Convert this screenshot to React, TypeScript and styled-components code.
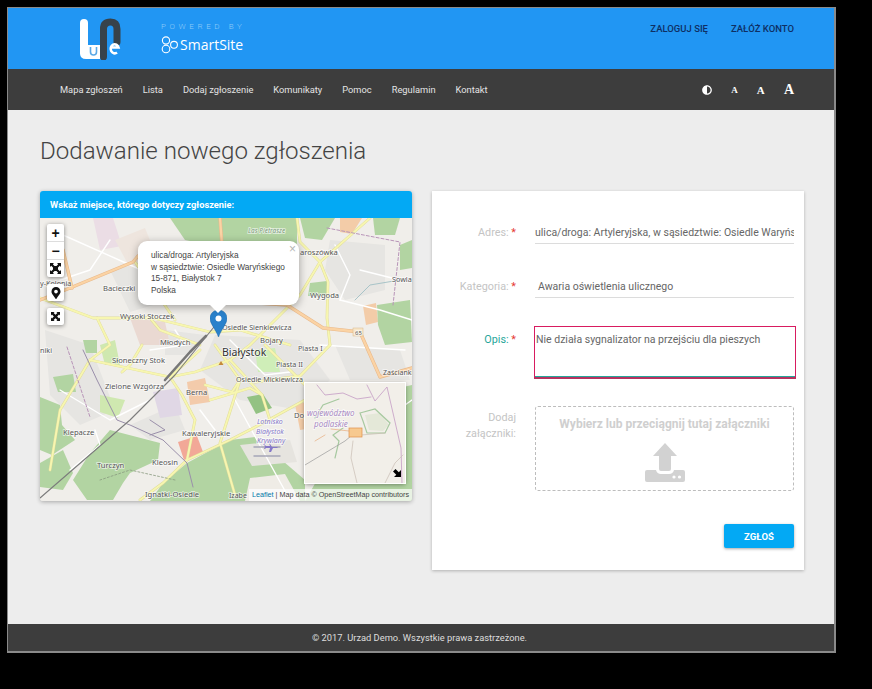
import React from "react";
import styled, { createGlobalStyle } from "styled-components";
import { FaAdjust, FaMapMarkerAlt } from "react-icons/fa";

const GlobalStyle = createGlobalStyle`
  html, body {
    margin: 0;
    background: #000;
  }
  body {
    font-family: Roboto, "Liberation Sans", sans-serif;
  }
`;

const Frame = styled.div`
  box-sizing: border-box;
  display: flex;
  flex-direction: column;
  width: 828px;
  height: 646px;
  margin: 7px 0 36px 8px;
  border: 1px solid #8a8a8a;
  border-left-width: 0;
  border-right-width: 2px;
  border-bottom-width: 2px;
  box-shadow: -1px 0 0 #8a8a8a;
`;

const Header = styled.header`
  display: flex;
  justify-content: space-between;
  height: 61px;
  background: #2196f3;
  padding: 0 40px 0 71px;
`;

const Brand = styled.div`
  display: flex;
  align-items: flex-start;
`;

const Logo = styled.svg`
  width: 42px;
  height: 42px;
  margin: 10px 40px 0 0;
`;

const Powered = styled.div`
  display: flex;
  flex-direction: column;
  padding-top: 14px;
`;

const PoweredBy = styled.span`
  font-size: 8px;
  line-height: 10px;
  letter-spacing: 3.6px;
  color: #8fcbf8;
  font-weight: 300;
`;

const SmartSite = styled.div`
  display: flex;
  align-items: center;
  gap: 1px;
  margin-top: 4px;
  color: #fff;
  font-family: "Open Sans", sans-serif;
  font-size: 14px;
  line-height: 18px;
`;

const Account = styled.nav`
  display: flex;
  gap: 23px;
  padding-top: 14px;
`;

const AccountLink = styled.a`
  font-size: 9.5px;
  line-height: 13px;
  font-weight: 500;
  color: #0e2f63;
`;

const NavBar = styled.nav`
  display: flex;
  align-items: center;
  justify-content: space-between;
  height: 41px;
  background: #3d3d3d;
  padding: 0 40px 0 52px;
`;

const NavLinks = styled.div`
  display: flex;
  gap: 20px;
`;

const NavLink = styled.a`
  font-size: 9.3px;
  font-weight: 400;
  color: #e4e4e4;
`;

const NavTools = styled.div`
  display: flex;
  align-items: center;
  justify-content: space-between;
  width: 92px;
  color: #fff;
`;

const SizeA = styled.span<{ $size: number }>`
  font-family: "Liberation Serif", serif;
  font-weight: 700;
  font-size: ${({ $size }) => $size}px;
  line-height: 14px;
`;

const Main = styled.main`
  flex: 1;
  background: #ededed;
  padding: 27px 30px 0 32px;
`;

const Title = styled.h1`
  margin: 0 0 26px;
  font-size: 24.1px;
  line-height: 28px;
  font-weight: 300;
  color: #444;
`;

const Columns = styled.div`
  display: grid;
  grid-template-columns: 372px 372px;
  column-gap: 20px;
  align-items: start;
`;

const MapCard = styled.section`
  border-radius: 3px;
  overflow: hidden;
  box-shadow: 0 1px 4px rgba(0, 0, 0, 0.3);
`;

const MapHeading = styled.div`
  height: 27px;
  padding-left: 10px;
  background: #03a9f4;
  color: #fff;
  font-size: 9.3px;
  font-weight: 700;
  line-height: 27px;
`;

const MapArea = styled.div`
  position: relative;
  height: 283px;
  overflow: hidden;
`;

const MapSvg = styled.svg`
  display: block;
  width: 372px;
  height: 283px;
`;

const MapShapes = styled.g`
  filter: blur(0.7px);
`;

const Place = styled.text<{ $size?: number; $color?: string; $italic?: boolean }>`
  font-family: "Noto Sans", "Open Sans", sans-serif;
  font-size: ${({ $size }) => $size ?? 7.6}px;
  font-style: ${({ $italic }) => ($italic ? "italic" : "normal")};
  fill: ${({ $color }) => $color ?? "#555"};
  stroke: rgba(255, 255, 255, 0.65);
  stroke-width: 1.6px;
  paint-order: stroke;
`;

const ControlStack = styled.div<{ $top: number }>`
  position: absolute;
  left: 7px;
  top: ${({ $top }) => $top}px;
  display: flex;
  flex-direction: column;
  width: 17px;
  border-radius: 2px;
  background: #fff;
  box-shadow: 0 1px 4px rgba(0, 0, 0, 0.45);
`;

const ControlButton = styled.div`
  display: flex;
  align-items: center;
  justify-content: center;
  height: 17px;
  font-family: "Liberation Sans", sans-serif;
  font-size: 14px;
  font-weight: 700;
  color: #111;
  border-bottom: 1px solid #ddd;
  &:last-child {
    border-bottom: 0;
  }
`;

const Popup = styled.div`
  position: absolute;
  left: 98px;
  top: 23px;
  box-sizing: border-box;
  width: 161px;
  height: 64px;
  padding: 9px 0 0 13px;
  background: #fff;
  border-radius: 9px;
  box-shadow: 0 2px 8px rgba(0, 0, 0, 0.35);
  font-family: "Liberation Sans", sans-serif;
  font-size: 8.3px;
  line-height: 11.5px;
  color: #444;
  &::after {
    content: "";
    position: absolute;
    left: 72px;
    bottom: -8px;
    width: 0;
    height: 0;
    border-left: 8px solid transparent;
    border-right: 8px solid transparent;
    border-top: 8px solid #fff;
  }
`;

const PopupClose = styled.span`
  position: absolute;
  right: 3px;
  top: 2px;
  font-size: 12px;
  line-height: 12px;
  color: #b5b5b5;
`;

const Marker = styled.svg`
  position: absolute;
  left: 170px;
  top: 92px;
  width: 17px;
  height: 27px;
`;

const MiniMap = styled.div`
  position: absolute;
  left: 265px;
  top: 165px;
  width: 100px;
  height: 100px;
  background: #f2efe9;
  box-shadow: 0 0 0 1px #fff, 0 1px 5px rgba(0, 0, 0, 0.5);
`;

const MiniSvg = styled.svg`
  display: block;
  width: 100px;
  height: 100px;
`;

const Attribution = styled.div`
  position: absolute;
  right: 0;
  bottom: 0;
  padding: 0 3px;
  background: rgba(255, 255, 255, 0.7);
  font-family: "Liberation Sans", sans-serif;
  font-size: 7.2px;
  line-height: 12px;
  color: #444;
  white-space: nowrap;
`;

const LeafletLink = styled.span`
  color: #0078a8;
`;

const FormCard = styled.form`
  box-sizing: border-box;
  height: 379px;
  padding: 31px 10px 0 0;
  background: #fff;
  box-shadow: 0 1px 3px rgba(0, 0, 0, 0.25);
`;

const Row = styled.div<{ $top: number }>`
  display: grid;
  grid-template-columns: 84px 259px;
  column-gap: 19px;
  margin-top: ${({ $top }) => $top}px;
`;

const Label = styled.label<{ $active?: boolean }>`
  font-size: 10.8px;
  line-height: 22px;
  text-align: right;
  padding-top: ${({ $active }) => ($active ? 3 : 0)}px;
  color: ${({ $active }) => ($active ? "#26a69a" : "#c4c4c4")};
`;

const Required = styled.span`
  color: #e53935;
`;

const LongLabel = styled(Label)`
  line-height: 16px;
  padding-top: 4px;
`;

const TextField = styled.input`
  box-sizing: border-box;
  width: 100%;
  height: 22px;
  padding: 0;
  border: 0;
  border-bottom: 1px solid #dcdcdc;
  outline: 0;
  background: transparent;
  font-family: Roboto, sans-serif;
  font-size: 10.5px;
  color: #666;
`;

const CategoryValue = styled.div`
  box-sizing: border-box;
  height: 22px;
  padding-left: 3px;
  border-bottom: 1px solid #dcdcdc;
  font-size: 10.5px;
  line-height: 21px;
  color: #666;
`;

const Description = styled.textarea`
  display: block;
  box-sizing: border-box;
  width: 262px;
  height: 53px;
  margin-left: -1px;
  padding: 6px 1px;
  border: 1px solid #d81b60;
  border-bottom: 2px solid #b5325f;
  box-shadow: inset 0 -1px 0 #26a69a;
  outline: 0;
  resize: none;
  font-family: Roboto, sans-serif;
  font-size: 10.5px;
  line-height: 14px;
  color: #666;
`;

const DropZone = styled.div`
  box-sizing: border-box;
  display: flex;
  flex-direction: column;
  align-items: center;
  height: 85px;
  padding-top: 9px;
  border: 1px dashed #bdbdbd;
  border-radius: 3px;
`;

const DropText = styled.span`
  font-size: 12px;
  line-height: 16px;
  font-weight: 700;
  color: #cfcfcf;
`;

const UploadIcon = styled.svg`
  width: 40px;
  height: 40px;
  margin-top: 11px;
`;

const Actions = styled.div`
  display: flex;
  justify-content: flex-end;
  margin-top: 33px;
`;

const SubmitButton = styled.button`
  width: 70px;
  height: 24px;
  padding: 0;
  border: 0;
  border-radius: 2px;
  background: #03a9f4;
  box-shadow: 0 1px 3px rgba(0, 0, 0, 0.35);
  color: #fff;
  font-family: Roboto, sans-serif;
  font-size: 9.5px;
  font-weight: 700;
`;

const Footer = styled.footer`
  height: 27px;
  background: #3d3d3d;
  color: #ddd;
  font-size: 9.3px;
  line-height: 28px;
  text-align: center;
  padding-right: 3px;
`;

const menu = ["Mapa zgłoszeń", "Lista", "Dodaj zgłoszenie", "Komunikaty", "Pomoc", "Regulamin", "Kontakt"];

const places: { t: string; x: number; y: number; s?: number; c?: string; i?: boolean }[] = [
  { t: "Las Pietrasze", x: 248, y: 233, s: 6.5, c: "#7d9a7d", i: true },
  { t: "aroszówka", x: 300, y: 255 },
  { t: "Wygoda", x: 310, y: 298 },
  { t: "Sowla", x: 392, y: 282, s: 7.2 },
  { t: "Osiedle Sienkiewicza", x: 222, y: 330, s: 7.2 },
  { t: "Bojary", x: 260, y: 343 },
  { t: "Wysoki Stoczek", x: 120, y: 319 },
  { t: "Bacieczki", x: 103, y: 291 },
  { t: "y-Kolonia", x: 40, y: 286, s: 7.2 },
  { t: "Młodych", x: 160, y: 345 },
  { t: "niki", x: 40, y: 353, s: 7.2 },
  { t: "Słoneczny Stok", x: 112, y: 363 },
  { t: "Zielone Wzgórza", x: 105, y: 389 },
  { t: "Berna", x: 186, y: 395 },
  { t: "Klepacze", x: 63, y: 435 },
  { t: "Kawaleryjskie", x: 182, y: 436 },
  { t: "Turczyn", x: 97, y: 468 },
  { t: "Kleosin", x: 152, y: 465 },
  { t: "Ignatki-Osiedle", x: 145, y: 497 },
  { t: "Białystok", x: 222, y: 356, s: 10.5, c: "#333" },
  { t: "Piasta I", x: 298, y: 351, s: 7.2 },
  { t: "Piasta II", x: 276, y: 367, s: 7.2 },
  { t: "Osiedle Mickiewicza", x: 236, y: 382, s: 7.2 },
  { t: "Zaścianki", x: 383, y: 375, s: 7 },
  { t: "Do", x: 294, y: 418 },
  { t: "Lotnisko", x: 257, y: 424, s: 7, c: "#8578c8", i: true },
  { t: "Białystok", x: 256, y: 434, s: 7, c: "#8578c8", i: true },
  { t: "Krywlany", x: 257, y: 443, s: 7, c: "#8578c8", i: true },
  { t: "Izabe", x: 229, y: 498, s: 7 }
];

// yellow streets with a darker casing
const streets = [
  "M40 298 L93 318 L153 318 L210 332 L240 330 L290 345",
  "M90 360 L170 377 L200 350",
  "M140 500 L163 483 L187 460 L230 440 L263 423 L305 400",
  "M320 262 L300 295 L287 308 L250 345 L230 360",
  "M320 262 L328 282 L327 318 L330 345",
  "M297 218 L300 242 L320 262 L370 218",
  "M170 377 L182 395 L195 420 L187 460",
  "M230 360 L195 372 L170 377",
  "M230 360 L262 395 L270 420",
  "M215 345 L240 380 L220 443 L235 495",
  "M265 345 L310 390",
  "M97 318 L110 345 L90 360 L60 410 L50 470",
  "M135 262 L175 320",
  "M200 345 L160 330 L150 318",
  "M255 382 L300 376 L330 345",
  "M210 400 L250 388 L262 395",
  "M205 385 L232 392 L240 380",
  "M142 345 L130 365 L122 372"
];

const whiteRoads = [
  "M63 235 L137 268 L190 300",
  "M320 345 L405 350",
  "M235 400 L290 500",
  "M70 470 L100 445 L95 430",
  "M360 270 L400 280",
  "M370 430 L412 400",
  "M60 390 L110 420 L150 400",
  "M110 240 L90 270 L60 280",
  "M340 300 L380 310 L412 320",
  "M200 410 L215 430",
  "M150 350 L185 345 L175 330",
  "M230 340 L265 375 L290 372",
  "M335 245 L350 275 L340 300"
];

const orangeRoads = ["M70 288 L133 262 L138 256", "M63 250 L72 288", "M220 218 L222 245", "M287 305 L323 328 L360 332 L380 377 L412 368", "M40 300 L70 288", "M215 300 L287 305"];

const App = () => {
  return (
    <>
      <GlobalStyle />
      <Frame>
        <Header>
          <Brand>
            <Logo viewBox="79 18 42 42">
              <path d="M103.5 57 V29 Q103.5 22 110.5 22 Q117 22 117 29 V42" stroke="#37424a" strokeWidth="7" fill="none" strokeLinecap="round" />
              <path d="M84 23 V52" stroke="#fff" strokeWidth="8" strokeLinecap="round" fill="none" />
              <path d="M80 45 H100 V59 H86 Q80 59 80 53 Z" fill="#fff" />
              <path d="M90.5 47 V52 Q90.5 55 93.5 55 Q96.5 55 96.5 52 V47" stroke="#5ca9e6" strokeWidth="1.6" fill="none" />
              <path d="M111 47.5 H118.5 A4 4.5 0 1 0 117 52.5" stroke="#fff" strokeWidth="2.6" fill="none" />
            </Logo>
            <Powered>
              <PoweredBy>POWERED BY</PoweredBy>
              <SmartSite>
                <svg width="18" height="18" viewBox="0 0 18 18" fill="none" stroke="#fff" strokeWidth="1.1">
                  <circle cx="5" cy="4.5" r="3.6" />
                  <circle cx="5" cy="13" r="3.8" />
                  <circle cx="13" cy="8.8" r="3.4" />
                </svg>
                SmartSite
              </SmartSite>
            </Powered>
          </Brand>
          <Account>
            <AccountLink>ZALOGUJ SIĘ</AccountLink>
            <AccountLink>ZAŁÓŻ KONTO</AccountLink>
          </Account>
        </Header>
        <NavBar>
          <NavLinks>
            {menu.map((item) => (
              <NavLink key={item}>{item}</NavLink>
            ))}
          </NavLinks>
          <NavTools>
            <FaAdjust size={10} />
            <SizeA $size={9}>A</SizeA>
            <SizeA $size={11}>A</SizeA>
            <SizeA $size={14}>A</SizeA>
          </NavTools>
        </NavBar>
        <Main>
          <Title>Dodawanie nowego zgłoszenia</Title>
          <Columns>
            <MapCard>
              <MapHeading>Wskaż miejsce, którego dotyczy zgłoszenie:</MapHeading>
              <MapArea>
                <MapSvg viewBox="40 218 372 283">
                  <rect x="40" y="218" width="372" height="283" fill="#f0eeea" />
                  <MapShapes>
                    {/* built up areas */}
                    <g fill="#e6e5e2">
                      <path d="M110 270 L150 262 L170 300 L130 312 Z" />
                      <path d="M45 330 L90 345 L115 410 L80 425 L50 395 Z" />
                      <path d="M215 335 L300 340 L330 380 L300 410 L240 400 L200 370 Z" />
                      <path d="M330 240 L385 245 L385 290 L345 300 L325 270 Z" />
                      <path d="M130 425 L175 405 L185 430 L150 440 Z" />
                      <path d="M335 345 L400 350 L410 380 L350 380 Z" />
                      <path d="M165 330 L205 335 L190 355 L165 355 Z" />
                    </g>
                    {/* pink and orange blocks */}
                    <path d="M93 218 L113 218 L122 246 L100 250 Z" fill="#ebdde5" />
                    <path d="M115 240 L145 228 L160 265 L130 268 Z" fill="#eee5de" />
                    <path d="M153 392 L178 388 L182 415 L160 418 Z" fill="#e0d7e5" />
                    <path d="M187 382 L205 378 L210 402 L190 405 Z" fill="#f3cbab" />
                    <path d="M178 442 L197 436 L203 452 L184 460 Z" fill="#f2a897" />
                    <path d="M340 218 L362 218 L352 234 L340 232 Z" fill="#f3cca8" />
                    <path d="M363 306 L376 303 L378 322 L366 325 Z" fill="#f3cca8" />
                    <path d="M295 404 L325 400 L330 425 L300 430 Z" fill="#f3cca8" />
                    <path d="M130 318 L165 322 L170 345 L140 345 Z" fill="#ead9d2" />
                    {/* forest */}
                    <g fill="#b2d4a2">
                      <path d="M170 218 L297 218 L297 245 L210 245 L185 240 Z" />
                      <path d="M300 218 L335 218 L322 240 L305 238 Z" />
                      <path d="M373 218 L400 218 L395 235 L375 235 Z" />
                      <path d="M400 245 L412 240 L412 268 L400 270 Z" />
                      <path d="M310 283 L327 281 L327 296 L308 296 Z" />
                      <path d="M377 305 L410 300 L412 342 L385 345 L378 325 Z" />
                      <path d="M83 340 L97 340 L97 353 L86 353 Z" />
                      <path d="M53 377 L73 374 L76 392 L58 392 Z" />
                      <path d="M40 397 L60 405 L62 425 L75 440 L52 455 L40 450 Z" />
                      <path d="M110 430 L160 443 L158 460 L130 473 L123 483 L113 500 L87 500 L73 480 L90 453 Z" />
                      <path d="M40 463 L63 450 L73 473 L63 490 L40 487 Z" />
                      <path d="M163 483 L187 463 L230 440 L255 437 L305 480 L305 501 L150 501 Z" />
                      <path d="M345 400 L412 385 L412 501 L305 501 L340 440 Z" />
                    </g>
                    <path d="M247 397 L263 394 L272 408 L256 414 Z" fill="#93c283" />
                    <path d="M100 345 L115 340 L120 365 L105 365 Z" fill="#cfe8b0" />
                    <path d="M255 350 L275 348 L280 372 L258 372 Z" fill="#cfeeb8" />
                    <path d="M100 395 L125 400 L118 418 L100 412 Z" fill="#cfe8b0" />
                    <path d="M240 445 L290 440 L297 462 L252 466 Z" fill="#e6e4df" />
                    <path d="M250 478 L285 474 L300 501 L245 501 Z" fill="#efece6" />
                    {/* streets */}
                    <g fill="none" strokeLinecap="round" strokeLinejoin="round">
                      {whiteRoads.map((d) => (
                        <path key={d} d={d} stroke="#fff" strokeWidth="1.4" />
                      ))}
                      {streets.map((d) => (
                        <path key={d} d={d} stroke="#e0dc9a" strokeWidth="2.8" />
                      ))}
                      {streets.map((d) => (
                        <path key={d} d={d} stroke="#f7f6b0" strokeWidth="1.9" />
                      ))}
                      {orangeRoads.map((d) => (
                        <path key={d} d={d} stroke="#e8b98c" strokeWidth="3.4" />
                      ))}
                      {orangeRoads.map((d) => (
                        <path key={d} d={d} stroke="#fbd3a4" strokeWidth="2.3" />
                      ))}
                      <path d="M83 350 L97 380 L117 420 L130 425 L163 440 L187 463 L193 487" stroke="#9a8faa" strokeWidth="1" />
                      <path d="M150 420 L165 430 L150 435" stroke="#9a8faa" strokeWidth="1" />
                      <path d="M40 498 L130 420 L175 375 L205 338 L218 322" stroke="#7c7c7c" strokeWidth="1.1" />
                      <path d="M165 380 L190 352 L206 336" stroke="#777" strokeWidth="2.6" />
                      <path d="M67 347 L90 417" stroke="#b894b8" strokeWidth="1" strokeDasharray="3 2" />
                      <path d="M327 228 L400 242 L393 305" stroke="#b894b8" strokeWidth="1" strokeDasharray="3 2" />
                      <path d="M355 300 L370 285 L400 280" stroke="#a8c4c8" strokeWidth="1" />
                      <path d="M175 480 L130 470 L100 480" stroke="#8a9a80" strokeWidth="0.8" strokeDasharray="2 2" />
                      <path d="M254 447 H280 M254 456 H280" stroke="#a5a5b8" strokeWidth="1.4" />
                    </g>
                    <path d="M270 444 l2 3 h5 l1 1 h-5 l-2 4 h-2 l1 -4 h-4 l-1 1 h-1 l1 -2 -1 -2 h1 l1 1 h4 l-1 -3 Z" fill="#8578c8" />
                    <rect x="353" y="328" width="10" height="8" fill="#f7e6c8" stroke="#d8b88a" strokeWidth="0.5" />
                    <path d="M221 361 l2.5 4 h-5 Z" fill="#c58a3a" />
                  </MapShapes>
                  {places.map((p) => (
                    <Place key={p.t + p.x} x={p.x} y={p.y} $size={p.s} $color={p.c} $italic={p.i}>
                      {p.t}
                    </Place>
                  ))}
                  <Place x={355} y={335} $size={6}>65</Place>
                </MapSvg>
                <ControlStack $top={6}>
                  <ControlButton>+</ControlButton>
                  <ControlButton>−</ControlButton>
                  <ControlButton>
                    <svg width="11" height="11" viewBox="0 0 11 11" fill="#111">
                      <rect x="3" y="3" width="5" height="5" />
                      <path d="M0 0 H4 L2.8 1.2 L4.5 3 L3 4.5 L1.2 2.8 L0 4 Z M11 0 V4 L9.8 2.8 L8 4.5 L6.5 3 L8.2 1.2 L7 0 Z M0 11 V7 L1.2 8.2 L3 6.5 L4.5 8 L2.8 9.8 L4 11 Z M11 11 H7 L8.2 9.8 L6.5 8 L8 6.5 L9.8 8.2 L11 7 Z" />
                    </svg>
                  </ControlButton>
                </ControlStack>
                <ControlStack $top={66}>
                  <ControlButton>
                    <FaMapMarkerAlt size={12} />
                  </ControlButton>
                </ControlStack>
                <ControlStack $top={90}>
                  <ControlButton>
                    <svg width="9" height="9" viewBox="0 0 11 11" fill="#111">
                      <path d="M0 0 H4.4 L3.2 1.2 L5.5 3.5 L7.8 1.2 L6.6 0 H11 V4.4 L9.8 3.2 L7.5 5.5 L9.8 7.8 L11 6.6 V11 H6.6 L7.8 9.8 L5.5 7.5 L3.2 9.8 L4.4 11 H0 V6.6 L1.2 7.8 L3.5 5.5 L1.2 3.2 L0 4.4 Z" />
                    </svg>
                  </ControlButton>
                </ControlStack>
                <Marker viewBox="0 0 17 27">
                  <path d="M8.5 0 C3.6 0 0 3.7 0 8.5 C0 13.5 5.5 19 8.5 27 C11.5 19 17 13.5 17 8.5 C17 3.7 13.4 0 8.5 0 Z" fill="#2a81cb" stroke="#1f6aa8" strokeWidth="0.5" />
                  <circle cx="8.5" cy="8.5" r="3" fill="#fff" />
                </Marker>
                <Popup>
                  <PopupClose>×</PopupClose>
                  ulica/droga: Artyleryjska
                  <br />
                  w sąsiedztwie: Osiedle Waryńskiego
                  <br />
                  15-871, Białystok 7
                  <br />
                  Polska
                </Popup>
                <MiniMap>
                  <MiniSvg viewBox="0 0 100 100">
                    <g fill="none" strokeLinecap="round">
                      <path d="M12 2 L20 12 L38 10 L52 16 L66 14 M62 2 L70 18 L82 4 L88 30 L96 65 L97 100" stroke="#c49cc4" strokeWidth="0.8" />
                      <path d="M60 32 L75 30 L84 42 L78 48 L64 47 Z" fill="#e4e8d8" stroke="none" />
                      <path d="M10 35 L18 22 L34 16 M30 75 L34 58 L28 52 L38 45 M55 30 L70 26 L85 40 L80 50 L62 50 L58 38 Z" stroke="#a7c9a0" strokeWidth="1.2" />
                      <path d="M0 82 L40 58 L52 48" stroke="#999" strokeWidth="0.7" />
                      <path d="M48 58 L46 75 L52 100 M56 52 L80 50 M80 100 L90 80 L98 72" stroke="#c9bdb3" strokeWidth="0.7" />
                      <path d="M10 58 L20 52 M44 48 L26 46" stroke="#e9b58c" strokeWidth="0.8" />
                    </g>
                    <Place x={2} y={33} $size={8} $color="#a98bc4" $italic>województwo</Place>
                    <Place x={9} y={44} $size={8} $color="#a98bc4" $italic>podlaskie</Place>
                    <rect x="44" y="45" width="13" height="9" fill="#f7c98f" stroke="#e0904c" strokeWidth="0.7" />
                    <path d="M96 94 V87 L93.8 89.2 L90.5 86 L88 88.5 L91.3 91.8 L89 94 Z" fill="#000" />
                  </MiniSvg>
                </MiniMap>
                <Attribution>
                  <LeafletLink>Leaflet</LeafletLink> | Map data © OpenStreetMap contributors
                </Attribution>
              </MapArea>
            </MapCard>
            <FormCard>
              <Row $top={0}>
                <Label>
                  Adres: <Required>*</Required>
                </Label>
                <TextField readOnly value="ulica/droga: Artyleryjska, w sąsiedztwie: Osiedle Waryńskiego, 15-871, Białystok" />
              </Row>
              <Row $top={32}>
                <Label>
                  Kategoria: <Required>*</Required>
                </Label>
                <CategoryValue>Awaria oświetlenia ulicznego</CategoryValue>
              </Row>
              <Row $top={28}>
                <Label $active>
                  Opis: <Required>*</Required>
                </Label>
                <Description readOnly value="Nie działa sygnalizator na przejściu dla pieszych" />
              </Row>
              <Row $top={27}>
                <LongLabel>
                  Dodaj
                  <br />
                  załączniki:
                </LongLabel>
                <DropZone>
                  <DropText>Wybierz lub przeciągnij tutaj załączniki</DropText>
                  <UploadIcon viewBox="0 0 40 40">
                    <path d="M20 0 L32 13 H26 V26 Q26 28 24 28 H16 Q14 28 14 26 V13 H8 Z" fill="#d2d2d2" />
                    <path d="M2 27 H11 Q12 31 16 31 H24 Q28 31 29 27 H38 Q40 27 40 29 V37 Q40 39 38 39 H2 Q0 39 0 37 V29 Q0 27 2 27 Z" fill="#d2d2d2" />
                    <circle cx="29" cy="34" r="1.6" fill="#fff" />
                    <circle cx="34.5" cy="34" r="1.6" fill="#fff" />
                  </UploadIcon>
                </DropZone>
              </Row>
              <Actions>
                <SubmitButton type="button">ZGŁOŚ</SubmitButton>
              </Actions>
            </FormCard>
          </Columns>
        </Main>
        <Footer>© 2017. Urzad Demo. Wszystkie prawa zastrzeżone.</Footer>
      </Frame>
    </>
  );
};

export default App;
